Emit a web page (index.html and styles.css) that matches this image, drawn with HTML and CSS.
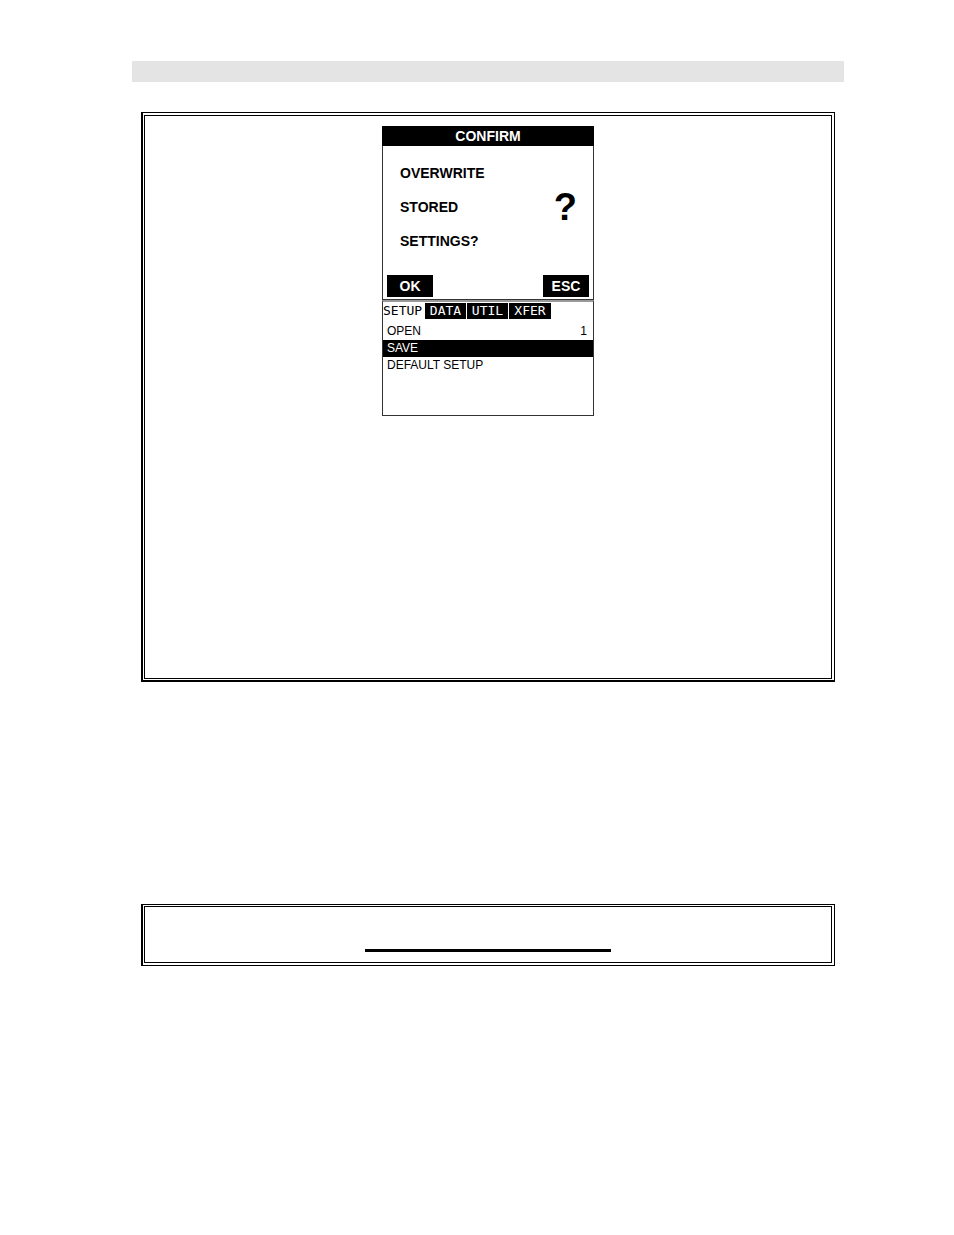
FILE: index.html
```
<!DOCTYPE html>
<html lang="en">
<head>
    <meta charset="UTF-8">
    <title>Overwrite Stored Settings</title>
    <link rel="stylesheet" href="styles.css">
</head>
<body>
    <header class="page-bar"></header>
    <main>
        <section class="frame">
            <div class="frame-inner screens">
                <div class="dialog">
                    <h1 class="dialog-title">CONFIRM</h1>
                    <div class="dialog-body">
                        <p class="dialog-text">OVERWRITE<br>STORED<br>SETTINGS?</p>
                        <span class="dialog-mark">?</span>
                    </div>
                    <div class="dialog-actions">
                        <button type="button" class="key">OK</button>
                        <button type="button" class="key">ESC</button>
                    </div>
                </div>
                <div class="menu">
                    <nav class="tabs">
                        <button type="button" class="tab active">SETUP</button>
                        <button type="button" class="tab">DATA</button>
                        <button type="button" class="tab">UTIL</button>
                        <button type="button" class="tab">XFER</button>
                    </nav>
                    <ul class="menu-list">
                        <li class="menu-item"><span>OPEN</span><span>1</span></li>
                        <li class="menu-item selected">SAVE</li>
                        <li class="menu-item">DEFAULT SETUP</li>
                    </ul>
                </div>
            </div>
        </section>
        <section class="frame frame-note">
            <div class="frame-inner note">
                <div class="note-line"></div>
            </div>
        </section>
    </main>
</body>
</html>
```
FILE: styles.css
```
body {
    margin: 0;
    padding: 61px 110px 0 132px;
    background: #fff;
    color: #000;
    font-family: "Liberation Sans", Arial, sans-serif;
}
.page-bar {
    height: 21px;
    margin-bottom: 30px;
    background: #e4e4e4;
}

/* double rule, heavier on the left and bottom */
.frame {
    margin: 0 9px;
    padding: 2px 2px 1px 1px;
    border: 1px solid #000;
    border-width: 1px 1px 2px 2px;
}
.frame-inner {
    border: 1px solid #000;
}
.screens {
    display: flex;
    flex-direction: column;
    align-items: center;
    padding: 10px 0 262px;
}

/* confirm dialog */
.dialog,
.menu {
    box-sizing: border-box;
    width: 212px;
    border: 1px solid #333;
}
.dialog-title {
    margin: -1px -1px 0;
    background: #000;
    color: #fff;
    font-size: 14px;
    line-height: 20px;
    text-align: center;
}
.dialog-body {
    display: flex;
    justify-content: space-between;
    align-items: center;
    padding: 10px 16px 0 17px;
    font-weight: bold;
}
.dialog-text {
    margin: 0;
    font-size: 14px;
    line-height: 34px;
}
.dialog-mark {
    font-size: 38px;
    line-height: 40px;
}
.dialog-actions {
    display: flex;
    justify-content: space-between;
    padding: 17px 4px 2px;
}
.key {
    min-width: 46px;
    height: 22px;
    padding: 0;
    border: none;
    background: #000;
    color: #fff;
    font: bold 14px "Liberation Sans", Arial, sans-serif;
}

/* setup menu */
.menu {
    border-top: 2px solid #999;
}
.tabs {
    display: flex;
    padding-top: 1px;
}
.tab {
    box-sizing: border-box;
    width: 42px;
    height: 16px;
    padding: 0;
    border: none;
    background: #000;
    color: #fff;
    font: 13px/16px "DejaVu Sans Mono", monospace;
    text-align: center;
}
.tab.active {
    background: #fff;
    color: #000;
    text-align: left;
}
.tab + .tab {
    border-right: 1px solid #fff;
}
.tab:last-child {
    border-right: none;
}
.menu-list {
    margin: 0;
    padding: 4px 0 41px;
    list-style: none;
}
.menu-item {
    display: flex;
    justify-content: space-between;
    padding: 0 6px 0 4px;
    font-size: 12px;
    line-height: 17px;
}
.menu-item.selected {
    background: #000;
    color: #fff;
}

.frame-note {
    margin-top: 222px;
    padding: 1px 2px 2px 1px;
    border-bottom-width: 1px;
}
.note {
    padding: 42px 0 10px;
}
.note-line {
    width: 36%;
    height: 3px;
    margin: 0 auto;
    background: #000;
}
```
